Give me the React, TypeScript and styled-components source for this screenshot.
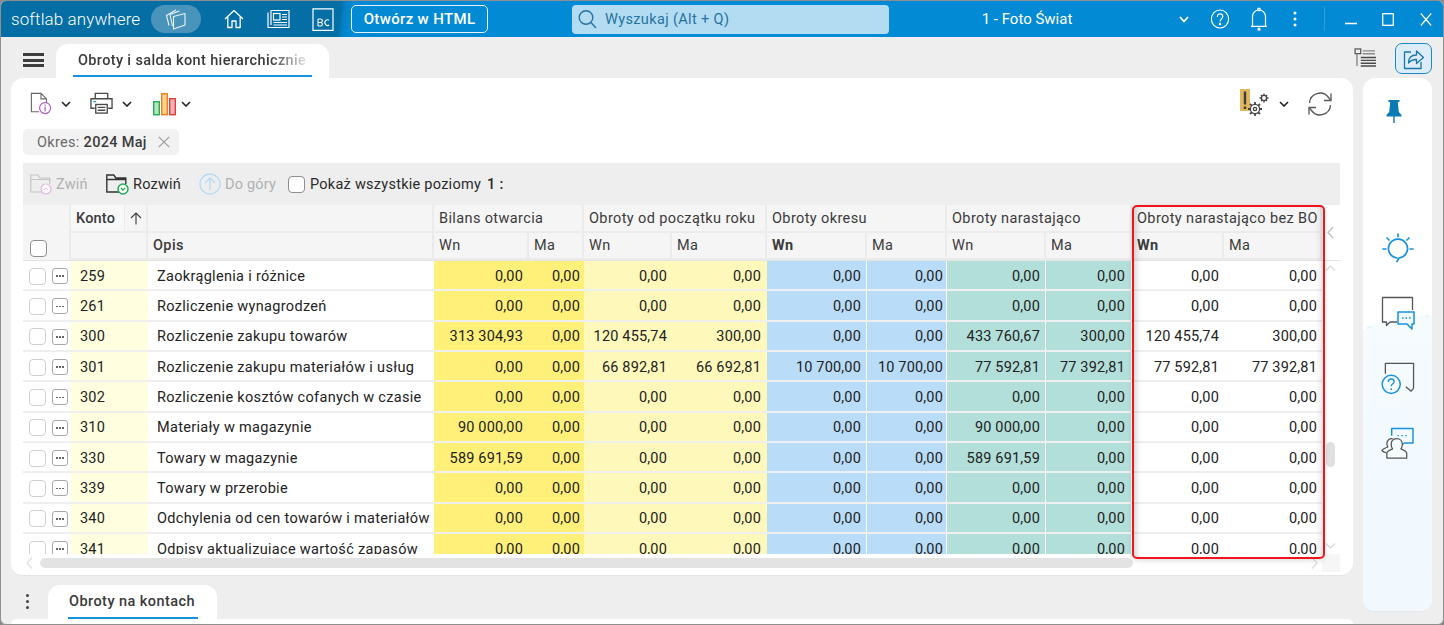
import React from "react";
import styled, { createGlobalStyle } from "styled-components";

const Global = createGlobalStyle`
  html, body { margin: 0; padding: 0; background: #8a8a8a; }
  body { font-family: Roboto, "Liberation Sans", sans-serif; color: #222; overflow: hidden; }
  * { box-sizing: border-box; }
`;

const COLS = "48px 77px 286px 95px 55px 88px 95px 100px 80px 99px 86px 92px 98px";

const Window = styled.div`
  width: 1444px; height: 625px; display: flex; flex-direction: column;
  border: 1px solid #8f8f8f; border-radius: 6px; overflow: hidden; background: #eeeeee;
`;
const TitleBar = styled.header`
  height: 36px; flex: none; display: flex; align-items: center; color: #fff;
  background: linear-gradient(97deg, #046ea5 0, #046ea5 338px, #0480c4 342px, #038ad4 350px);
`;
const Brand = styled.div`
  font-size: 17px; font-weight: 300; letter-spacing: .1px; margin-left: 10px; width: 140px; white-space: nowrap; color: #fff;
`;
const AppPill = styled.div`
  width: 50px; height: 28px; border-radius: 14px; background: #4a94bc; display: flex; align-items: center; justify-content: center;
`;
const TitleIcon = styled.div<{ $left: number; $w: number }>`
  margin-left: ${p => p.$left}px; width: ${p => p.$w}px; height: 36px; flex: none; display: flex; align-items: center; justify-content: center;
`;
const HtmlButton = styled.div`
  margin-left: 16px; width: 137px; height: 28px; border: 1px solid #e6f3fa; border-radius: 5px; display: flex; align-items: center; justify-content: center;
  font-size: 15px; font-weight: 500; letter-spacing: .35px; color: #fff;
`;
const SearchBox = styled.div`
  margin-left: 84px; width: 317px; height: 29px; border-radius: 4px; background: #b3dcf3; display: flex; align-items: center; padding-left: 6px; gap: 8px;
  font-size: 14.5px; color: #26739f; letter-spacing: .36px;
`;
const Company = styled.div`
  margin-left: 92px; width: 92px; font-size: 15px; text-align: center; color: #fff; white-space: nowrap;
`;
const Divider = styled.div`
  margin-left: 27px; width: 1px; height: 24px; background: #2e9fdc;
`;

const Work = styled.div`
  flex: 1; min-height: 0; display: flex; padding-left: 10px; padding-right: 11px;
`;
const MainColumn = styled.div`
  width: 1342px; flex: none; display: flex; flex-direction: column;
`;
const SideColumn = styled.div`
  width: 69px; margin-left: 10px; flex: none; display: flex; flex-direction: column;
`;
const TabStrip = styled.div`
  height: 41px; flex: none; display: flex; align-items: flex-start; position: relative;
`;
const Burger = styled.div`
  margin: 16px 0 0 12px; width: 21px; height: 14px; display: flex; flex-direction: column; justify-content: space-between;
  span { display: block; height: 3px; background: #3c3c3c; }
`;
const TopTab = styled.div`
  margin: 7px 0 0 12px; width: 273px; height: 34px; background: #fff; border-radius: 12px 12px 0 0; padding: 0 17px; display: flex; flex-direction: column;
`;
const TabLabel = styled.div`
  height: 31px; line-height: 33px; font-size: 14.5px; font-weight: 500; color: #3a3a3a; padding-left: 5px; white-space: nowrap; overflow: hidden;
  letter-spacing: .36px;
  -webkit-mask-image: linear-gradient(90deg, #000 82%, rgba(0,0,0,.12) 98%);
  mask-image: linear-gradient(90deg, #000 82%, rgba(0,0,0,.12) 98%);
`;
const TabLine = styled.div`
  height: 2px; background: #1792dc;
`;
const Card = styled.section`
  height: 498px; flex: none; background: #fff; border-radius: 12px; padding-left: 12px; border-bottom: 1px solid #e4e4e4;
`;
const ActionBar = styled.div`
  height: 51px; display: flex; align-items: center; padding: 0 21px 0 7px;
`;
const ActionIcon = styled.div<{ $gap?: number }>`
  margin-left: ${p => p.$gap ?? 0}px; display: flex; align-items: center;
`;
const Chevron = styled.div<{ $gap: number }>`
  margin-left: ${p => p.$gap}px; display: flex;
`;
const Spacer = styled.div`flex: 1;`;
const ChipRow = styled.div`
  height: 34px; display: flex; align-items: flex-start;
`;
const Chip = styled.div`
  width: 156px; height: 26px; background: #f2f2f2; border-radius: 5px; padding-left: 14px; display: flex; align-items: center; gap: 4px; font-size: 14.5px; color: #6a6a6a; letter-spacing: .3px;
  b { font-weight: 500; color: #3c3c3c; }
`;
const ChipClose = styled.div`margin-left: 7px; display: flex;`;
const GridToolbar = styled.div`
  width: 1317px; height: 42px; background: #eeeeee; display: flex; align-items: center; padding-left: 7px; font-size: 14.5px;
`;
const ToolItem = styled.div<{ $off?: boolean; $w: number }>`
  width: ${p => p.$w}px; display: flex; align-items: center; gap: 4px; color: ${p => (p.$off ? "#b0b0b0" : "#2a2a2a")}; white-space: nowrap; letter-spacing: .2px;
`;
const CheckBox = styled.div<{ $muted?: boolean }>`
  width: 17px; height: 17px; flex: none; background: #fff; border-radius: 4px; border: 1px solid ${p => (p.$muted ? "#d0d0d0" : "#8e8e8e")};
`;
const LevelLabel = styled.span`
  margin-left: 5px; letter-spacing: .26px; color: #2a2a2a;
  b { font-weight: 500; margin-left: 6px; }
`;
const TableArea = styled.div`
  position: relative; width: 1317px;
`;
const HeaderWrap = styled.div`
  display: flex; height: 56px; border-bottom: 1px solid #e4e4e4;
`;
const HeaderGrid = styled.div`
  display: grid; width: 1299px; grid-template-columns: ${COLS}; grid-template-rows: 28px 27px; background: #f5f5f5;
`;
const HeadCell = styled.div<{ $span?: number; $weight?: number; $pad?: number }>`
  grid-column: span ${p => p.$span ?? 1}; display: flex; align-items: center; padding-left: ${p => p.$pad ?? 5}px;
  font-size: 14.5px; font-weight: ${p => p.$weight ?? 400}; color: #3b3b3b; letter-spacing: .38px; white-space: nowrap; overflow: hidden;
  border-right: 2px solid #ebebeb; border-bottom: 2px solid #ebebeb;
`;
const SelectHead = styled.div`
  grid-row: span 2; display: flex; align-items: flex-end; padding: 0 0 3px 7px; border-right: 2px solid #ebebeb; background: #f5f5f5;
`;
const KontoHead = styled.div`
  display: grid; grid-template-columns: 54px 1fr; grid-column: span 1;
  border-right: 2px solid #ebebeb; border-bottom: 2px solid #ebebeb;
`;
const KontoLabel = styled.div`
  background: #f8f8f8; border-right: 1px solid #ebebeb; padding-left: 5px; display: flex; align-items: center; font-size: 14.5px; font-weight: 500; color: #3b3b3b; letter-spacing: .2px;
`;
const SortCell = styled.div`
  display: flex; align-items: center; justify-content: center;
`;
const HeadGutter = styled.div`
  width: 18px; display: flex; align-items: flex-end; justify-content: center; padding-bottom: 21px; padding-right: 1px;
`;
const BodyWrap = styled.div`
  display: flex; height: 293px;
`;
const Rows = styled.div`
  width: 1299px; height: 293px; overflow: hidden;
`;
const Row = styled.div`
  display: grid; grid-template-columns: ${COLS}; height: 30.33px; border-bottom: 2px solid #efefef; font-size: 14.5px; color: #222; letter-spacing: .18px;
`;
const SelectCell = styled.div`
  display: flex; align-items: center; gap: 6px; padding: 2px 0 0 6px;
`;
const DotsButton = styled.div`
  width: 16px; height: 16px; border: 1px solid #a8a8a8; border-radius: 3px; display: flex; align-items: center; justify-content: center; gap: 1.5px; background: #fff;
  i { width: 1.5px; height: 1.5px; background: #666; display: block; }
`;
const KontoCell = styled.div`
  background: #ffffe0; padding: 2px 0 0 9px; display: flex; align-items: center;
`;
const OpisCell = styled.div`
  padding: 2px 0 0 9px; display: flex; align-items: center; white-space: nowrap; overflow: hidden; letter-spacing: .32px;
`;
const TONES: Record<string, string> = { y: "#fff07a", l: "#fff8bb", b: "#b9dcf9", g: "#b2dfd9", w: "#ffffff" };
const Amount = styled.div<{ $tone: string; $pad: number }>`
  background: ${p => TONES[p.$tone]}; display: flex; align-items: center; justify-content: flex-end; padding: 2px ${p => p.$pad}px 0 0; white-space: nowrap;
  border-right: 1px solid ${p => (p.$tone === "b" || p.$tone === "g" ? "#ffffff" : "transparent")};
`;
const VScroll = styled.div`
  width: 18px; height: 293px; display: flex; flex-direction: column; align-items: center; padding-right: 1px;
`;
const VThumb = styled.div`
  margin-top: 171px; width: 9px; height: 25px; border-radius: 5px; background: #e0e0e0;
`;
const ChevSlot = styled.div<{ $top?: number; $auto?: boolean }>`
  display: flex; margin-top: ${p => (p.$auto ? "auto" : `${p.$top ?? 0}px`)}; margin-bottom: ${p => (p.$auto ? "5px" : "0")};
`;
const HScroll = styled.div`
  height: 18px; display: flex; align-items: center; padding-left: 3px;
`;
const HThumb = styled.div`
  margin-left: 7px; width: 1093px; height: 10px; border-radius: 5px; background: #e3e3e3;
`;
const HRight = styled.div`
  margin-left: 178px; display: flex;
`;
const Corner = styled.div`
  margin-left: auto; width: 18px; height: 18px; background: #f6f6f6;
`;
const RedFrame = styled.div`
  position: absolute; left: 1109px; top: 0; width: 193px; height: 354px; border: 2px solid #f2141c; border-radius: 5px; pointer-events: none;
  box-shadow: inset 7px 0 6px -5px rgba(0,0,0,.18), inset -7px 0 6px -5px rgba(0,0,0,.14), 0 2px 5px rgba(0,0,0,.12);
`;
const BottomStrip = styled.div`
  margin-top: 9px; height: 34px; flex: none; display: flex; align-items: flex-start;
`;
const BottomDots = styled.div`
  margin: 9px 0 0 15px; width: 4px; display: flex; flex-direction: column; gap: 3px;
  i { display: block; width: 3px; height: 3px; border-radius: 50%; background: #444; }
`;
const BottomTab = styled.div`
  margin-left: 18px; width: 169px; height: 34px; background: #fff; border-radius: 12px 12px 0 0; padding: 0 19px 0 20px; display: flex; flex-direction: column;
`;
const BottomLabel = styled.div`
  height: 32px; line-height: 34px; font-size: 14.5px; font-weight: 500; color: #3a3a3a; padding-left: 1px; letter-spacing: .45px; white-space: nowrap;
`;
const BottomCard = styled.div`
  flex: 1; background: #fff; border-radius: 12px 12px 0 0; min-height: 4px;
`;
const ViewTools = styled.div`
  height: 41px; flex: none; margin-left: -9px; display: flex; align-items: center; justify-content: space-between;
`;
const ShareButton = styled.div`
  width: 37px; height: 31px; margin-top: 2px; border: 1px solid #1f88c4; border-radius: 7px; background: #dcedf8; display: flex; align-items: center; justify-content: center;
`;
const SidePanel = styled.aside`
  height: 534px; flex: none; position: relative; overflow: hidden; border-radius: 12px; background: #fff; display: flex; flex-direction: column; align-items: center; border-bottom: 1px solid #e6e6e6;
`;
const SideWave = styled.svg`
  position: absolute; left: 0; top: 236px;
`;
const SideIcon = styled.div<{ $top: number; $x?: number }>`
  position: relative; margin-top: ${p => p.$top}px; margin-left: ${p => p.$x ?? 0}px; display: flex;
`;

const Chev = ({ c = "#222" }: { c?: string }) => (
  <svg width="10" height="6" viewBox="0 0 10 6" fill="none" stroke={c} strokeWidth="1.6"><path d="M1 1l4 4 4-4" /></svg>
);
const ChevUp = () => <svg width="11" height="6" viewBox="0 0 11 6" fill="none" stroke="#d8d8d8" strokeWidth="1.2"><path d="M1 5.5L5.5 1 10 5.5" /></svg>;
const ChevDown = () => <svg width="11" height="6" viewBox="0 0 11 6" fill="none" stroke="#d8d8d8" strokeWidth="1.2"><path d="M1 .5L5.5 5 10 .5" /></svg>;
const ChevLeft = ({ c = "#c8c8c8", h = 12 }: { c?: string; h?: number }) => (
  <svg width="7" height={h} viewBox="0 0 7 12" fill="none" stroke={c} strokeWidth="1.2"><path d="M6 .5L1 6l5 5.5" /></svg>
);
const ChevRight = () => <svg width="7" height="12" viewBox="0 0 7 12" fill="none" stroke="#dcdcdc" strokeWidth="1.2"><path d="M1 .5L6 6l-5 5.5" /></svg>;

const M = "0,00";
type R = [string, string, string[]];
const z = Array(10).fill(M);
const rows: R[] = [
  ["259", "Zaokrąglenia i różnice", z],
  ["261", "Rozliczenie wynagrodzeń", z],
  ["300", "Rozliczenie zakupu towarów", ["313 304,93", M, "120 455,74", "300,00", M, M, "433 760,67", "300,00", "120 455,74", "300,00"]],
  ["301", "Rozliczenie zakupu materiałów i usług", [M, M, "66 892,81", "66 692,81", "10 700,00", "10 700,00", "77 592,81", "77 392,81", "77 592,81", "77 392,81"]],
  ["302", "Rozliczenie kosztów cofanych w czasie", z],
  ["310", "Materiały w magazynie", ["90 000,00", M, M, M, M, M, "90 000,00", M, M, M]],
  ["330", "Towary w magazynie", ["589 691,59", M, M, M, M, M, "589 691,59", M, M, M]],
  ["339", "Towary w przerobie", z],
  ["340", "Odchylenia od cen towarów i materiałów", z],
  ["341", "Odpisy aktualizujące wartość zapasów", z],
];
const tones = ["y", "y", "l", "l", "b", "b", "g", "g", "w", "w"];
const pads = [5, 3, 4, 5, 5, 3, 5, 6, 4, 4];

export default function App() {
  return (
    <Window>
      <Global />
      <TitleBar>
        <Brand>softlab anywhere</Brand>
        <AppPill>
          <svg width="24" height="24" viewBox="0 0 24 24" fill="none" stroke="#eaf5fb" strokeWidth="1.1" strokeLinejoin="round">
            <path d="M5 18.500L2.500 8.500 12 3" />
            <path d="M8.500 19L6 7.500 15.500 4" />
            <path d="M9.500 9.500L21 6.500v11.500l-11.500 4z" />
          </svg>
        </AppPill>
        <TitleIcon $left={21} $w={24}>
          <svg width="20" height="20" viewBox="0 0 20 20" fill="none" stroke="#fff" strokeWidth="1.3" strokeLinejoin="round">
            <path d="M1 10l9-8.500 9 8.500" /><path d="M3.800 8v10.500h4.200V12h4v6.500h4.200V8" />
          </svg>
        </TitleIcon>
        <TitleIcon $left={20} $w={24}>
          <svg width="23" height="20" viewBox="0 0 23 20" fill="none" stroke="#fff" strokeWidth="1.2">
            <path d="M1 3.500V18.500H22V1.500H4V16" />
            <rect x="6.500" y="4.500" width="6.500" height="6.500" />
            <path d="M15 5.500h5M15 8h5M15 10.500h5M6.500 13.500h13.500M6.500 16h13.500" />
          </svg>
        </TitleIcon>
        <TitleIcon $left={21} $w={24}>
          <svg width="22" height="23" viewBox="0 0 22 23" fill="none" stroke="#fff" strokeWidth="1.2">
            <path d="M1 .8h20v21.500H1z" />
            <path d="M6 11v7M6 11h2.600a1.700 1.700 0 010 3.500H6h3a1.800 1.800 0 010 3.500H6M17 12.200a2.800 2.800 0 10.2 4.800" strokeWidth="1.1" />
          </svg>
        </TitleIcon>
        <HtmlButton>Otwórz w HTML</HtmlButton>
        <SearchBox>
          <svg width="19" height="20" viewBox="0 0 19 20" fill="none" stroke="#26739f" strokeWidth="1.4"><circle cx="8" cy="8.500" r="6.800" /><path d="M13 13.500l5 5.500" /></svg>
          Wyszukaj (Alt + Q)
        </SearchBox>
        <Company>1 - Foto Świat</Company>
        <TitleIcon $left={106} $w={10}>
          <svg width="10" height="7" viewBox="0 0 10 7" fill="none" stroke="#fff" strokeWidth="1.8"><path d="M1 1l4 4.500L9 1" /></svg>
        </TitleIcon>
        <TitleIcon $left={21} $w={20}>
          <svg width="20" height="20" viewBox="0 0 20 20" fill="none" stroke="#fff" strokeWidth="1.2">
            <ellipse cx="10" cy="10" rx="8.600" ry="9" />
            <path d="M7.300 8c0-2 1.200-3.200 2.800-3.200S12.800 6 12.800 7.600c0 2-2.700 2.400-2.700 5" />
            <circle cx="10" cy="15" r=".7" fill="#fff" />
          </svg>
        </TitleIcon>
        <TitleIcon $left={19} $w={20}>
          <svg width="18" height="24" viewBox="0 0 18 24" fill="none" stroke="#fff" strokeWidth="1.2">
            <path d="M2.500 19V9.500a6.500 6.500 0 0113 0V19" />
            <path d="M1 19.300h16" /><circle cx="9" cy="2.400" r="1.300" /><circle cx="9" cy="22.200" r="1" fill="#fff" />
          </svg>
        </TitleIcon>
        <TitleIcon $left={24} $w={4}>
          <svg width="4" height="16" viewBox="0 0 4 16" fill="#fff"><circle cx="2" cy="2" r="1.500" /><circle cx="2" cy="8" r="1.500" /><circle cx="2" cy="14" r="1.500" /></svg>
        </TitleIcon>
        <Divider />
        <TitleIcon $left={20} $w={12}>
          <svg width="12" height="12" viewBox="0 0 12 12" stroke="#fff" strokeWidth="1.3"><path d="M0 10.500h12" /></svg>
        </TitleIcon>
        <TitleIcon $left={25} $w={12}>
          <svg width="12" height="13" viewBox="0 0 12 13" fill="none" stroke="#fff" strokeWidth="1.3"><rect x=".7" y=".7" width="10.600" height="11.600" /></svg>
        </TitleIcon>
        <TitleIcon $left={26} $w={12}>
          <svg width="12" height="13" viewBox="0 0 12 13" fill="none" stroke="#fff" strokeWidth="1.2"><path d="M.8.500l10.400 12M11.200.500L.8 12.500" /></svg>
        </TitleIcon>
      </TitleBar>
      <Work>
        <MainColumn>
          <TabStrip>
            <Burger><span /><span /><span /></Burger>
            <TopTab>
              <TabLabel>Obroty i salda kont hierarchicznie</TabLabel>
              <TabLine />
            </TopTab>
          </TabStrip>
          <Card>
            <ActionBar>
              <ActionIcon>
                <svg width="22" height="23" viewBox="0 0 24 24" fill="none">
                  <path d="M10 21H1.500V1H12l6 6v5M12 1v6h6" stroke="#666" strokeWidth="1.2" />
                  <circle cx="16.500" cy="17" r="6" stroke="#b05cc0" strokeWidth="1.3" fill="#fff" />
                  <path d="M16.500 15.500v5M16.500 13v1.400" stroke="#b05cc0" strokeWidth="1.4" />
                </svg>
              </ActionIcon>
              <Chevron $gap={9}><Chev /></Chevron>
              <ActionIcon $gap={19}>
                <svg width="23" height="23" viewBox="0 0 24 24" fill="none" stroke="#4a4a4a" strokeWidth="1.4">
                  <path d="M5.500 7V1.500h13V7" />
                  <path d="M5 17H1V7h22v10h-4" />
                  <rect x="6" y="13" width="12" height="9" fill="#fff" />
                  <path d="M8 16h8M8 19h8" />
                  <path d="M3.500 10h3" stroke="#1792dc" />
                </svg>
              </ActionIcon>
              <Chevron $gap={9}><Chev /></Chevron>
              <ActionIcon $gap={21}>
                <svg width="23" height="24" viewBox="0 0 23 24">
                  <rect x=".7" y="9.700" width="5.600" height="13" fill="#b6e6c2" stroke="#1fae55" strokeWidth="1.4" />
                  <rect x="8.700" y="1.700" width="5.600" height="21" fill="#fbd38a" stroke="#ef7d22" strokeWidth="1.4" />
                  <rect x="16.700" y="6.700" width="5.600" height="16" fill="#f8b4b4" stroke="#e33b3b" strokeWidth="1.4" />
                </svg>
              </ActionIcon>
              <Chevron $gap={5}><Chev /></Chevron>
              <Spacer />
              <ActionIcon>
                <svg width="31" height="30" viewBox="0 0 31 30" fill="none">
                  <rect x="0" y="0" width="10" height="22" fill="#e0b75c" />
                  <path d="M5 2.500v13M5 17.500v2.500" stroke="#3c3c3c" strokeWidth="2.4" />
                  <g stroke="#444" strokeWidth="1.3">
                    <circle cx="15" cy="20" r="4.600" fill="#fff" /><circle cx="15" cy="20" r="1.600" />
                    <path d="M15 13v2.400M15 24.600V27M8 20h2.400M19.600 20H22M10 15l1.700 1.700M18.300 23.300L20 25M10 25l1.700-1.700M18.300 16.700L20 15" strokeWidth="1.8" />
                    <circle cx="24" cy="9" r="2.600" /><path d="M24 4.500v1.600M24 11.800v1.700M19.500 9h1.700M26.800 9h1.700M21 6l1.100 1.100M25.900 10.900L27 12M21 12l1.100-1.100M25.900 7.100L27 6" strokeWidth="1.4" />
                  </g>
                </svg>
              </ActionIcon>
              <Chevron $gap={8}><Chev /></Chevron>
              <ActionIcon $gap={19}>
                <svg width="24" height="24" viewBox="0 0 24 24" fill="none" stroke="#555" strokeWidth="1.3">
                  <path d="M1.500 11a10.500 10.500 0 0119-5.500l2.300 2.500" /><path d="M23 1.500V8.500h-7" />
                  <path d="M22.500 13a10.500 10.500 0 01-19 5.500L1.200 16" /><path d="M1 22.500V15.500h7" />
                </svg>
              </ActionIcon>
            </ActionBar>
            <ChipRow>
              <Chip>
                Okres: <b>2024 Maj</b>
                <ChipClose>
                  <svg width="12" height="12" viewBox="0 0 12 12" stroke="#9b9b9b" strokeWidth="1.2"><path d="M.8.800l10.400 10.400M11.200.800L.8 11.200" /></svg>
                </ChipClose>
              </Chip>
            </ChipRow>
            <GridToolbar>
              <ToolItem $off $w={76}>
                <svg width="22" height="22" viewBox="0 0 22 22" fill="none">
                  <path d="M.8 5V19H12M.8 5V2h7l2 3h10v6M.8 6.500h19" stroke="#c4c4c4" strokeWidth="1.2" />
                  <circle cx="16" cy="16" r="5" fill="#fff" stroke="#e2b6e6" strokeWidth="1.2" /><path d="M14 17l2-2 2 2" stroke="#e2b6e6" />
                </svg>
                Zwiń
              </ToolItem>
              <ToolItem $w={93}>
                <svg width="23" height="22" viewBox="0 0 23 22" fill="none">
                  <path d="M.8 5V19H13M.8 5V2h7l2 3h10v6M.8 6.500h19" stroke="#333" strokeWidth="1.4" />
                  <circle cx="17" cy="16" r="5" fill="#fff" stroke="#1faf55" strokeWidth="1.5" /><path d="M15 15l2 2 2-2" stroke="#1faf55" strokeWidth="1.3" />
                </svg>
                Rozwiń
              </ToolItem>
              <ToolItem $off $w={89}>
                <svg width="22" height="22" viewBox="0 0 22 22" fill="none" stroke="#b9dcf3" strokeWidth="1.4">
                  <circle cx="11" cy="11" r="10" /><path d="M11 17V5.500M6 10l5-5 5 5" />
                </svg>
                Do góry
              </ToolItem>
              <CheckBox />
              <LevelLabel>Pokaż wszystkie poziomy<b>1 :</b></LevelLabel>
            </GridToolbar>
            <TableArea>
              <HeaderWrap>
                <HeaderGrid>
                  <SelectHead><CheckBox /></SelectHead>
                  <KontoHead>
                    <KontoLabel>Konto</KontoLabel>
                    <SortCell>
                      <svg width="12" height="13" viewBox="0 0 12 13" fill="none" stroke="#444" strokeWidth="1.2"><path d="M6 12.500V1M1 6l5-5 5 5" /></svg>
                    </SortCell>
                  </KontoHead>
                  <HeadCell />
                  <HeadCell $span={2}>Bilans otwarcia</HeadCell>
                  <HeadCell $span={2}>Obroty od początku roku</HeadCell>
                  <HeadCell $span={2}>Obroty okresu</HeadCell>
                  <HeadCell $span={2}>Obroty narastająco</HeadCell>
                  <HeadCell $span={2}>Obroty narastająco bez BO</HeadCell>
                  <HeadCell />
                  <HeadCell $weight={500}>Opis</HeadCell>
                  <HeadCell>Wn</HeadCell><HeadCell>Ma</HeadCell>
                  <HeadCell>Wn</HeadCell><HeadCell>Ma</HeadCell>
                  <HeadCell $weight={700}>Wn</HeadCell><HeadCell>Ma</HeadCell>
                  <HeadCell>Wn</HeadCell><HeadCell>Ma</HeadCell>
                  <HeadCell $weight={700}>Wn</HeadCell><HeadCell>Ma</HeadCell>
                </HeaderGrid>
                <HeadGutter><ChevLeft c="#bdbdbd" h={13} /></HeadGutter>
              </HeaderWrap>
              <BodyWrap>
                <Rows>
                  {rows.map(([k, o, v]) => (
                    <Row key={k}>
                      <SelectCell><CheckBox $muted /><DotsButton><i /><i /><i /></DotsButton></SelectCell>
                      <KontoCell>{k}</KontoCell>
                      <OpisCell>{o}</OpisCell>
                      {v.map((a, i) => <Amount key={i} $tone={tones[i]} $pad={pads[i]}>{a}</Amount>)}
                    </Row>
                  ))}
                </Rows>
                <VScroll>
                  <ChevSlot $top={4}><ChevUp /></ChevSlot>
                  <VThumb />
                  <ChevSlot $auto><ChevDown /></ChevSlot>
                </VScroll>
              </BodyWrap>
              <HScroll>
                <ChevLeft c="#e0e0e0" />
                <HThumb />
                <HRight><ChevRight /></HRight>
                <Corner />
              </HScroll>
              <RedFrame />
            </TableArea>
          </Card>
          <BottomStrip>
            <BottomDots><i /><i /><i /></BottomDots>
            <BottomTab>
              <BottomLabel>Obroty na kontach</BottomLabel>
              <TabLine />
            </BottomTab>
          </BottomStrip>
          <BottomCard />
        </MainColumn>
        <SideColumn>
          <ViewTools>
            <svg width="23" height="19" viewBox="0 0 24 20" fill="none" stroke="#4a4a4a" strokeWidth="1.2">
              <rect x="1" y="1" width="6" height="5" />
              <path d="M3 6v13M9 3h13M9 6h13" strokeWidth="1.5" stroke="#8a8a8a" />
              <path d="M7 10h16M7 13h16M7 16h16M7 19h16" strokeWidth="1.5" />
            </svg>
            <ShareButton>
              <svg width="22" height="22" viewBox="0 0 22 22" fill="none" stroke="#1a74ad" strokeWidth="1.3" strokeLinejoin="round">
                <path d="M8 4H1.500v16.500H18V14" />
                <path d="M5.500 15c0-5 3-8 8-8V3l7 6.500-7 6v-4c-3.500 0-6 1-8 3.500z" />
              </svg>
            </ShareButton>
          </ViewTools>
          <SidePanel>
            <SideWave width="69" height="298" viewBox="0 0 69 298">
              <defs>
                <linearGradient id="sideFill" x1="0" y1="0" x2="0" y2="1">
                  <stop offset="0" stopColor="#f6fbfe" />
                  <stop offset="1" stopColor="#eef6fd" />
                </linearGradient>
              </defs>
              <path d="M0 16C24 4 48 0 69 2V298H0z" fill="url(#sideFill)" />
              <path d="M0 60C28 80 50 110 69 120V298H0z" fill="#f4faff" opacity=".6" />
              <path d="M4 14C24 6 44 1 66 2" fill="none" stroke="#d6ecf9" strokeDasharray="5 10" />
            </SideWave>
            <SideIcon $top={21} $x={-8}>
              <svg width="16" height="24" viewBox="0 0 16 24" fill="#0a7ab5">
                <path d="M2.500 1h11v2h-1.700l1 10 2.700 3v1.500H.5V16l2.700-3 1-10H2.500z" />
                <path d="M7.300 17h1.400v7H7.300z" />
              </svg>
            </SideIcon>
            <SideIcon $top={110} $x={0}>
              <svg width="32" height="31" viewBox="0 0 32 31" fill="none" stroke="#1792dc" strokeWidth="1.7" strokeLinecap="round">
                <path d="M16 1v2.500M5 5l2 2M27 5l-2 2M1 16h3M28 16h3" />
                <path d="M15 28.500l2-3.500a9.500 9.500 0 10-2 0" />
              </svg>
            </SideIcon>
            <SideIcon $top={32} $x={0}>
              <svg width="34" height="35" viewBox="0 0 34 35" fill="none" strokeLinejoin="round">
                <path d="M16 26H9l-3.500 3.500V26H1.500V1.500h30V14" stroke="#555" strokeWidth="1.3" />
                <path d="M17 16h16v12h-2v5l-5-5h-9z" stroke="#1792dc" strokeWidth="1.5" fill="#f1f9fe" />
                <path d="M21 22h1.500M24.500 22H26M28 22h1.500" stroke="#1792dc" strokeWidth="1.3" />
              </svg>
            </SideIcon>
            <SideIcon $top={31} $x={0}>
              <svg width="34" height="35" viewBox="0 0 34 36" fill="none" strokeLinejoin="round">
                <path d="M4 12V1.500h29V27M33 27l-2.500 3-5.500-4.500" stroke="#555" strokeWidth="1.3" />
                <circle cx="10" cy="23" r="9.300" stroke="#1792dc" strokeWidth="1.5" fill="#f6fbfe" />
                <path d="M7 20.500c0-2 1.400-3 3-3s3 1 3 2.800c0 2-3 2.300-3 4.700" stroke="#1792dc" strokeWidth="1.4" />
                <circle cx="10" cy="28" r=".9" fill="#1792dc" />
              </svg>
            </SideIcon>
            <SideIcon $top={30} $x={0}>
              <svg width="33" height="32" viewBox="0 0 34 33" fill="none" strokeLinejoin="round">
                <path d="M11 9V1.500h22v15h-9l-5 4v-4h-2" stroke="#1792dc" strokeWidth="1.5" />
                <path d="M17 9h1.500M21 9h1.500M25 9h1.500" stroke="#1792dc" strokeWidth="1.3" />
                <path d="M12 12a5 5 0 00-6 5c0 1.500.5 2.500 1 3.500-2 1-5.500 2-6 4 1 1 3 2 4.500 2" stroke="#555" strokeWidth="1.3" />
                <path d="M16 12c4 0 6 2.800 6 6 0 2-.8 3.500-1.500 4.500 2 1 5 2 6 4V32H6v-5.500c1-2 4-3 6-4-.8-1-1.500-2.500-1.500-4.500 0-3.200 1.500-6 5.500-6z" stroke="#555" strokeWidth="1.3" fill="#f6fbfe" />
              </svg>
            </SideIcon>
          </SidePanel>
        </SideColumn>
      </Work>
    </Window>
  );
}
